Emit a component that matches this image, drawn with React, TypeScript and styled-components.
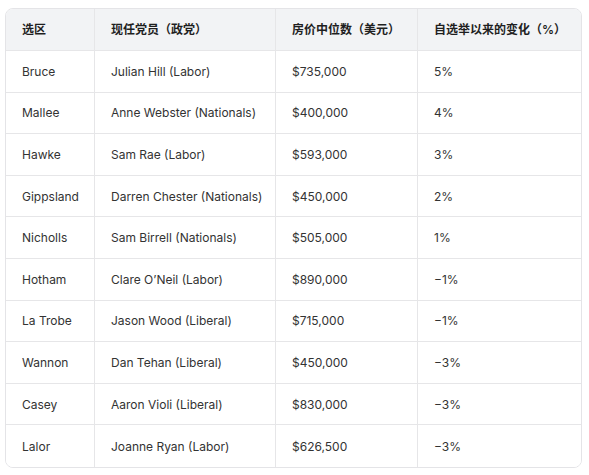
import React from "react";
import styled, { createGlobalStyle } from "styled-components";

const GlobalStyle = createGlobalStyle`
  html, body {
    margin: 0;
    padding: 0;
    background: #ffffff;
  }
  body {
    font-family: Inter, "Noto Sans CJK SC", sans-serif;
    -webkit-font-smoothing: antialiased;
  }
`;

const Page = styled.div`
  padding: 8px 7px 7px 5px;
`;

const TableBox = styled.div`
  width: 577px;
  box-sizing: border-box;
  border: 1px solid #e4e4e7;
  border-radius: 8px;
  overflow: hidden;
  display: grid;
  grid-template-columns: 89px 181px 142px 163px;
  grid-template-rows: 42px repeat(10, 41.6px);
`;

const Cell = styled.div<{ $head?: boolean; $lastCol?: boolean; $lastRow?: boolean }>`
  box-sizing: border-box;
  display: flex;
  align-items: center;
  padding: 0 16px;
  font-size: 12px;
  line-height: 17px;
  white-space: nowrap;
  color: ${(p) => (p.$head ? "#1f1f1f" : "#333333")};
  font-weight: ${(p) => (p.$head ? 600 : 400)};
  background: ${(p) => (p.$head ? "#f2f3f5" : "#ffffff")};
  border-right: ${(p) => (p.$lastCol ? "none" : "1px solid #e6e6e8")};
  border-bottom: ${(p) => (p.$lastRow ? "none" : "1px solid #e6e6e8")};
`;

const headers = ["选区", "现任党员（政党）", "房价中位数（美元）", "自选举以来的变化（%）"];

const rows: string[][] = [
  ["Bruce", "Julian Hill (Labor)", "$735,000", "5%"],
  ["Mallee", "Anne Webster (Nationals)", "$400,000", "4%"],
  ["Hawke", "Sam Rae (Labor)", "$593,000", "3%"],
  ["Gippsland", "Darren Chester (Nationals)", "$450,000", "2%"],
  ["Nicholls", "Sam Birrell (Nationals)", "$505,000", "1%"],
  ["Hotham", "Clare O\u2019Neil (Labor)", "$890,000", "\u22121%"],
  ["La Trobe", "Jason Wood (Liberal)", "$715,000", "\u22121%"],
  ["Wannon", "Dan Tehan (Liberal)", "$450,000", "\u22123%"],
  ["Casey", "Aaron Violi (Liberal)", "$830,000", "\u22123%"],
  ["Lalor", "Joanne Ryan (Labor)", "$626,500", "\u22123%"],
];

export default function App() {
  return (
    <>
      <GlobalStyle />
      <Page>
        <TableBox>
          {headers.map((h, i) => (
            <Cell key={h} $head $lastCol={i === 3}>
              {h}
            </Cell>
          ))}
          {rows.map((r, ri) =>
            r.map((c, ci) => (
              <Cell key={`${ri}-${ci}`} $lastCol={ci === 3} $lastRow={ri === rows.length - 1}>
                {c}
              </Cell>
            ))
          )}
        </TableBox>
      </Page>
    </>
  );
}
